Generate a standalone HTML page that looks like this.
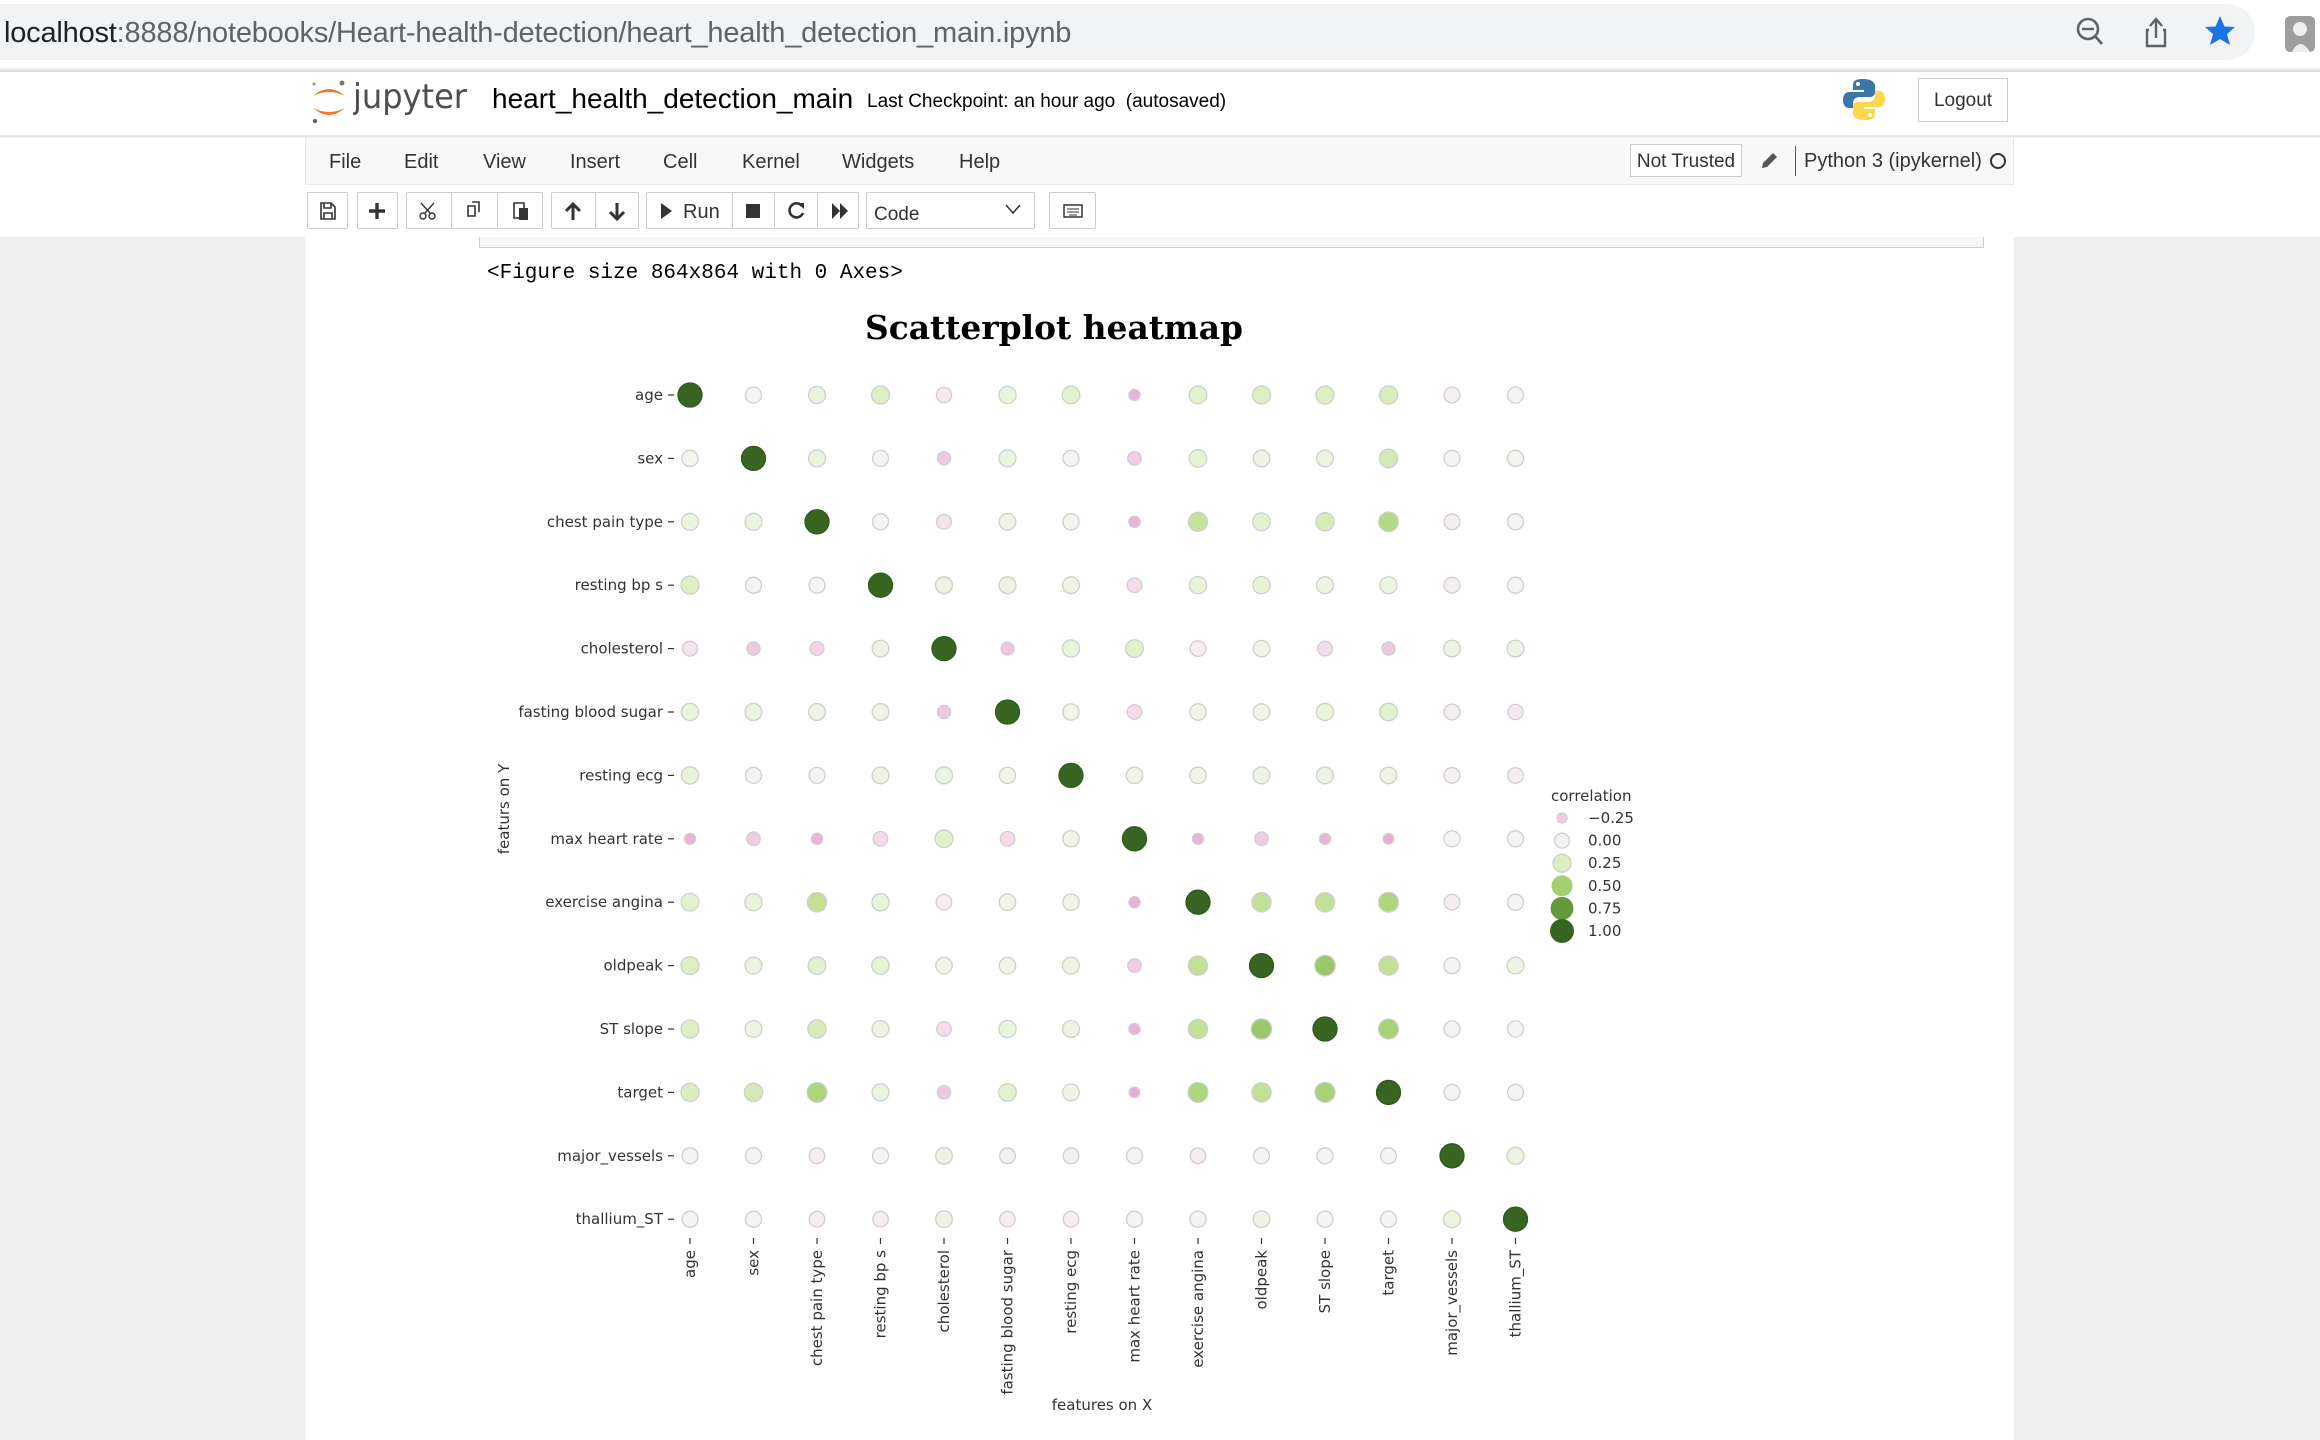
<!DOCTYPE html>
<html><head><meta charset="utf-8">
<style>
*{margin:0;padding:0;box-sizing:border-box}
body{width:2320px;height:1440px;overflow:hidden;background:#eeeeee;font-family:"Liberation Sans",sans-serif;position:relative}
.abs{position:absolute}
#addr{left:0;top:0;width:2320px;height:68px;background:#fff}
#addrbar{left:0;top:4px;width:2255px;height:56px;background:#f1f3f4;border-radius:0 28px 28px 0}
#addrtxt{left:4px;top:17px;font-size:29px;color:#5f6368;letter-spacing:-0.2px}
#header{left:0;top:70px;width:2320px;height:67px;background:#fff;border-top:2px solid #dcdcdc;border-bottom:2px solid #e7e7e7}
#below{left:0;top:138px;width:2320px;height:99px;background:#fff}
#menubar{left:305px;top:138px;width:1709px;height:47px;background:#f8f8f8;border:1px solid #e7e7e7;border-top:none}
.menu{top:151px;font-size:20px;color:#333}
.btn{top:192px;height:37px;border:1px solid #ccc;border-radius:2px;background:#fff}
#nb{left:305px;top:237px;width:1709px;height:1203px;background:#fff}
</style></head><body>
<div class="abs" id="addr"></div>
<div class="abs" id="addrbar"></div>
<div class="abs" id="addrtxt"><span style="color:#202124">localhost</span>:8888/notebooks/Heart-health-detection/heart_health_detection_main.ipynb</div>
<svg class="abs" style="left:2070px;top:12px" width="250" height="44" viewBox="0 0 250 44">
 <circle cx="18" cy="17" r="10" fill="none" stroke="#5f6368" stroke-width="2.6"/><line x1="12" y1="17" x2="24" y2="17" stroke="#5f6368" stroke-width="2.4"/><line x1="25" y1="24" x2="32" y2="32" stroke="#5f6368" stroke-width="2.8"/>
 <path d="M80 14 L86 7 L92 14 M86 7 L86 26 M79 18 L77 18 L77 34 L95 34 L95 18 L93 18" fill="none" stroke="#5f6368" stroke-width="2.4"/>
 <path d="M150 4 L154.5 14.5 L165 15 L157 22 L160 33 L150 27 L140 33 L143 22 L135 15 L145.5 14.5 Z" fill="#1a73e8"/>
 <rect x="215" y="4" width="30" height="36" rx="5" fill="#9e9e9e"/><circle cx="230" cy="17" r="7" fill="#eee"/><path d="M222 40 Q230 24 240 40Z" fill="#eee"/>
</svg>
<div class="abs" id="header"></div>
<svg class="abs" style="left:309px;top:78px" width="42" height="48" viewBox="0 0 42 48">
 <path d="M4 18 Q20 4 36 18 Q20 10 4 18Z" fill="#f37726"/><path d="M4 30 Q20 44 36 30 Q20 38 4 30Z" fill="#f37726"/>
 <circle cx="33" cy="5" r="2.5" fill="#767677"/><circle cx="5" cy="6" r="1.5" fill="#989798"/><circle cx="6" cy="43" r="2.2" fill="#616262"/>
</svg>
<svg class="abs" style="left:353px;top:72px" width="120" height="50"><text x="0" y="36" font-family="DejaVu Sans, sans-serif" font-size="34" fill="#4e4e4e" textLength="114" lengthAdjust="spacingAndGlyphs">jupyter</text></svg>
<div class="abs" style="left:492px;top:83px;font-size:28px;color:#000">heart_health_detection_main</div>
<div class="abs" style="left:867px;top:91px;font-size:19px;color:#000">Last Checkpoint: an hour ago &nbsp;(autosaved)</div>
<svg class="abs" style="left:1843px;top:78px" width="42" height="43" viewBox="0 0 42 43">
 <path d="M20 1 C10 1 10 5 10 8 L10 12 L21 12 L21 14 L6 14 C1 14 0 19 0 22 C0 28 3 30 6 30 L10 30 L10 25 C10 21 13 19 17 19 L27 19 C30 19 32 17 32 14 L32 8 C32 4 28 1 20 1Z" fill="#3d76a9"/>
 <path d="M22 42 C32 42 32 38 32 35 L32 31 L21 31 L21 29 L36 29 C41 29 42 24 42 21 C42 15 39 13 36 13 L32 13 L32 18 C32 22 29 24 25 24 L15 24 C12 24 10 26 10 29 L10 35 C10 39 14 42 22 42Z" fill="#fdd84c"/>
 <circle cx="15" cy="6" r="2" fill="#fff"/><circle cx="27" cy="37" r="2" fill="#fff"/>
</svg>
<div class="abs" style="left:1918px;top:78px;width:90px;height:44px;border:1px solid #ccc;background:#fff;font-size:19px;text-align:center;line-height:44px;color:#333">Logout</div>
<div class="abs" id="below"></div>
<div class="abs" id="menubar"></div>
<div class="abs menu" style="left:329px">File</div>
<div class="abs menu" style="left:404px">Edit</div>
<div class="abs menu" style="left:483px">View</div>
<div class="abs menu" style="left:570px">Insert</div>
<div class="abs menu" style="left:663px">Cell</div>
<div class="abs menu" style="left:742px">Kernel</div>
<div class="abs menu" style="left:842px">Widgets</div>
<div class="abs menu" style="left:959px">Help</div>
<div class="abs" style="left:1630px;top:144px;width:112px;height:33px;border:1px solid #ccc;background:#fff;font-size:19px;text-align:center;line-height:33px;color:#333">Not Trusted</div>
<svg class="abs" style="left:1758px;top:150px" width="22" height="22" viewBox="0 0 22 22"><path d="M4 18 L5 13 L15 3 L19 7 L9 17 Z M3 19 L5 18" fill="#555"/></svg>
<div class="abs" style="left:1795px;top:146px;width:1px;height:30px;background:#555"></div>
<div class="abs" style="left:1804px;top:150px;font-size:20px;color:#333">Python 3 (ipykernel)</div>
<div class="abs" style="left:1990px;top:153px;width:16px;height:16px;border:2px solid #333;border-radius:50%"></div>
<div class="abs btn" style="left:307px;width:41px"></div>
<div class="abs btn" style="left:357px;width:41px"></div>
<div class="abs btn" style="left:406px;width:137px"></div>
<div class="abs btn" style="left:551px;width:88px"></div>
<div class="abs btn" style="left:646px;width:213px"></div>
<div class="abs btn" style="left:866px;width:169px"></div>
<div class="abs btn" style="left:1049px;width:47px"></div>
<svg class="abs" style="left:0;top:192px" width="1100" height="38" viewBox="0 192 1100 38">
 <g fill="none" stroke="#ccc" stroke-width="1"><line x1="451.5" y1="192" x2="451.5" y2="229"/><line x1="497.5" y1="192" x2="497.5" y2="229"/><line x1="595.5" y1="192" x2="595.5" y2="229"/><line x1="732.5" y1="192" x2="732.5" y2="229"/><line x1="774.5" y1="192" x2="774.5" y2="229"/><line x1="817.5" y1="192" x2="817.5" y2="229"/></g>
 <path d="M321 203 h10 l4 4 v12 h-14z M324 203 v5 h7 v-5 M324 213 h8 v6 h-8z" fill="none" stroke="#333" stroke-width="1.6"/>
 <path d="M377 203 v16 M369 211 h16" stroke="#333" stroke-width="3.4"/>
 <g fill="none" stroke="#333" stroke-width="1.4"><circle cx="423" cy="216" r="3"/><circle cx="432" cy="216" r="3"/><path d="M425 213 L434 203 M430 213 L421 203"/></g>
 <path d="M468 206 h7 v10 h-7z M472 202 h7 v10 M472 202" fill="#fff" stroke="#333" stroke-width="1.6"/>
 <path d="M514 203 h10 v15 h-10z" fill="#fff" stroke="#333" stroke-width="1.6"/><path d="M519 208 h9 v12 h-9z" fill="#333"/>
 <path d="M573 220 v-15 M566 211 l7 -7 l7 7" fill="none" stroke="#333" stroke-width="3"/>
 <path d="M617 203 v15 M610 212 l7 7 l7 -7" fill="none" stroke="#333" stroke-width="3"/>
 <path d="M661 203 l11 8 l-11 8z" fill="#333"/>
 <text x="683" y="218" font-size="20" fill="#333" font-family="Liberation Sans">Run</text>
 <rect x="746" y="204" width="14" height="14" fill="#333"/>
 <path d="M802 206 a7 7 0 1 0 1 7" fill="none" stroke="#333" stroke-width="2.6"/><path d="M797 203 l7 0 l0 6z" fill="#333"/>
 <path d="M832 203 l8 8 l-8 8z M840 203 l8 8 l-8 8z" fill="#333"/>
 <text x="874" y="220" font-size="19" fill="#333" font-family="Liberation Sans">Code</text>
 <path d="M1006 205 l7 8 l7 -8" fill="none" stroke="#333" stroke-width="1.5"/>
 <rect x="1064" y="205" width="18" height="12" fill="none" stroke="#333" stroke-width="1.5"/><path d="M1067 209 h12 M1067 212 h12 M1069 215 h8" stroke="#333" stroke-width="1"/>
</svg>
<div class="abs" id="nb"></div>
<div class="abs" style="left:479px;top:237px;width:1505px;height:11px;border:1px solid #cfcfcf;border-top:none;background:#f7f7f7"></div>
<div class="abs" style="left:487px;top:262px;font-family:'Liberation Mono',monospace;font-size:21px;color:#000">&lt;Figure size 864x864 with 0 Axes&gt;</div>
<svg class="abs" id="plot" style="left:0;top:0" width="2320" height="1440" viewBox="0 0 2320 1440" font-family="DejaVu Sans, sans-serif">
 <text x="1054" y="339" text-anchor="middle" font-family="DejaVu Serif, serif" font-weight="bold" font-size="33" textLength="378" lengthAdjust="spacingAndGlyphs" fill="#000">Scatterplot heatmap</text>
 <g id="g"></g>
 <text transform="translate(509,809) rotate(-90)" text-anchor="middle" font-size="15" fill="#333">featurs on Y</text>
 <text x="1102" y="1410" text-anchor="middle" font-size="15" fill="#333">features on X</text>
 <text x="1551" y="801" font-size="15" fill="#333">correlation</text>
</svg>
<script>
var L=["age","sex","chest pain type","resting bp s","cholesterol","fasting blood sugar","resting ecg","max heart rate","exercise angina","oldpeak","ST slope","target","major_vessels","thallium_ST"];
var D=1;
var M=[
[D,0.0,0.12,0.25,-0.05,0.15,0.2,-0.35,0.2,0.25,0.25,0.27,-0.02,0.0],
[0.03,D,0.12,0.0,-0.2,0.12,0.0,-0.18,0.18,0.08,0.1,0.3,0.0,0.02],
[0.12,0.12,D,0.0,-0.08,0.08,0.03,-0.33,0.38,0.2,0.28,0.45,-0.02,0.0],
[0.25,0.0,0.0,D,0.1,0.1,0.1,-0.1,0.15,0.17,0.1,0.12,-0.02,0.0],
[-0.07,-0.2,-0.15,0.08,D,-0.22,0.15,0.22,-0.03,0.05,-0.1,-0.2,0.08,0.08],
[0.15,0.12,0.08,0.08,-0.2,D,0.03,-0.1,0.05,0.05,0.15,0.2,-0.02,-0.05],
[0.15,0.0,0.0,0.1,0.12,0.03,D,0.05,0.05,0.1,0.1,0.07,-0.02,-0.03],
[-0.35,-0.18,-0.33,-0.1,0.22,-0.1,0.05,D,-0.35,-0.18,-0.35,-0.38,0.0,0.0],
[0.2,0.15,0.4,0.15,-0.03,0.05,0.05,-0.35,D,0.4,0.4,0.48,-0.03,0.0],
[0.25,0.1,0.2,0.17,0.05,0.05,0.1,-0.18,0.4,D,0.55,0.4,0.0,0.1],
[0.25,0.1,0.28,0.1,-0.1,0.15,0.1,-0.35,0.4,0.55,D,0.5,0.0,0.0],
[0.27,0.3,0.48,0.12,-0.2,0.2,0.07,-0.38,0.48,0.4,0.5,D,0.0,0.0],
[0,0,-0.03,0,0.08,-0.02,-0.02,0,-0.03,0,0,0,D,0.12],
[0,0,-0.03,-0.03,0.08,-0.03,-0.03,0,0.02,0.08,0,0,0.12,D]];
var S=[[-0.4,[230,170,210]],[-0.2,[240,200,226]],[-0.05,[245,232,240]],[0,[244,244,244]],[0.15,[233,244,216]],[0.25,[221,239,195]],[0.4,[194,225,149]],[0.5,[168,210,116]],[0.75,[98,153,58]],[1,[56,101,34]]];
function col(v){if(v<=S[0][0])return"rgb("+S[0][1]+")";for(var i=1;i<S.length;i++){if(v<=S[i][0]){var a=S[i-1],b=S[i],t=(v-a[0])/(b[0]-a[0]);return"rgb("+[0,1,2].map(function(k){return Math.round(a[1][k]+t*(b[1][k]-a[1][k]))}).join(",")+")";}}return"rgb("+S[S.length-1][1]+")";}
function rad(v){return v>=0?8+4*v:Math.max(5,8+7*v);}
var h="",x0=690,y0=395,dx=63.5,dy=63.4;
for(var i=0;i<14;i++){var y=y0+i*dy;
 h+='<text x="663" y="'+(y+5)+'" text-anchor="end" font-size="15" fill="#333">'+L[i]+'</text><line x1="668" y1="'+y+'" x2="674" y2="'+y+'" stroke="#333" stroke-width="1.2"/>';
 for(var j=0;j<14;j++){var v=M[i][j],x=x0+j*dx;
  h+='<circle cx="'+x+'" cy="'+y+'" r="'+rad(v)+'" fill="'+col(v)+'" stroke="'+(v==1?'#2e5a1c':'#cfcfcf')+'" stroke-width="1.3"/>';}}
for(var j=0;j<14;j++){var x=x0+j*dx;
 h+='<line x1="'+x+'" y1="1238" x2="'+x+'" y2="1244" stroke="#333" stroke-width="1.2"/><text transform="translate('+(x+5)+',1250) rotate(-90)" text-anchor="end" font-size="15" fill="#333">'+L[j]+'</text>';}
var lt=["\u22120.25","0.00","0.25","0.50","0.75","1.00"];
var lc=["#f0cce3","#f2f2f2","#dbeebf","#a6cf72","#62993a","#376522"],lr=[5,7.5,9,10.5,11.5,12];
for(var k=0;k<6;k++){var y=818+k*22.6;
 h+='<circle cx="1562" cy="'+y+'" r="'+lr[k]+'" fill="'+lc[k]+'" stroke="'+(k>2?'none':'#cfcfcf')+'" stroke-width="1.3"/><text x="1588" y="'+(y+5)+'" font-size="15" fill="#333">'+lt[k]+'</text>';}
document.getElementById("g").innerHTML=h;
</script>
</body></html>
